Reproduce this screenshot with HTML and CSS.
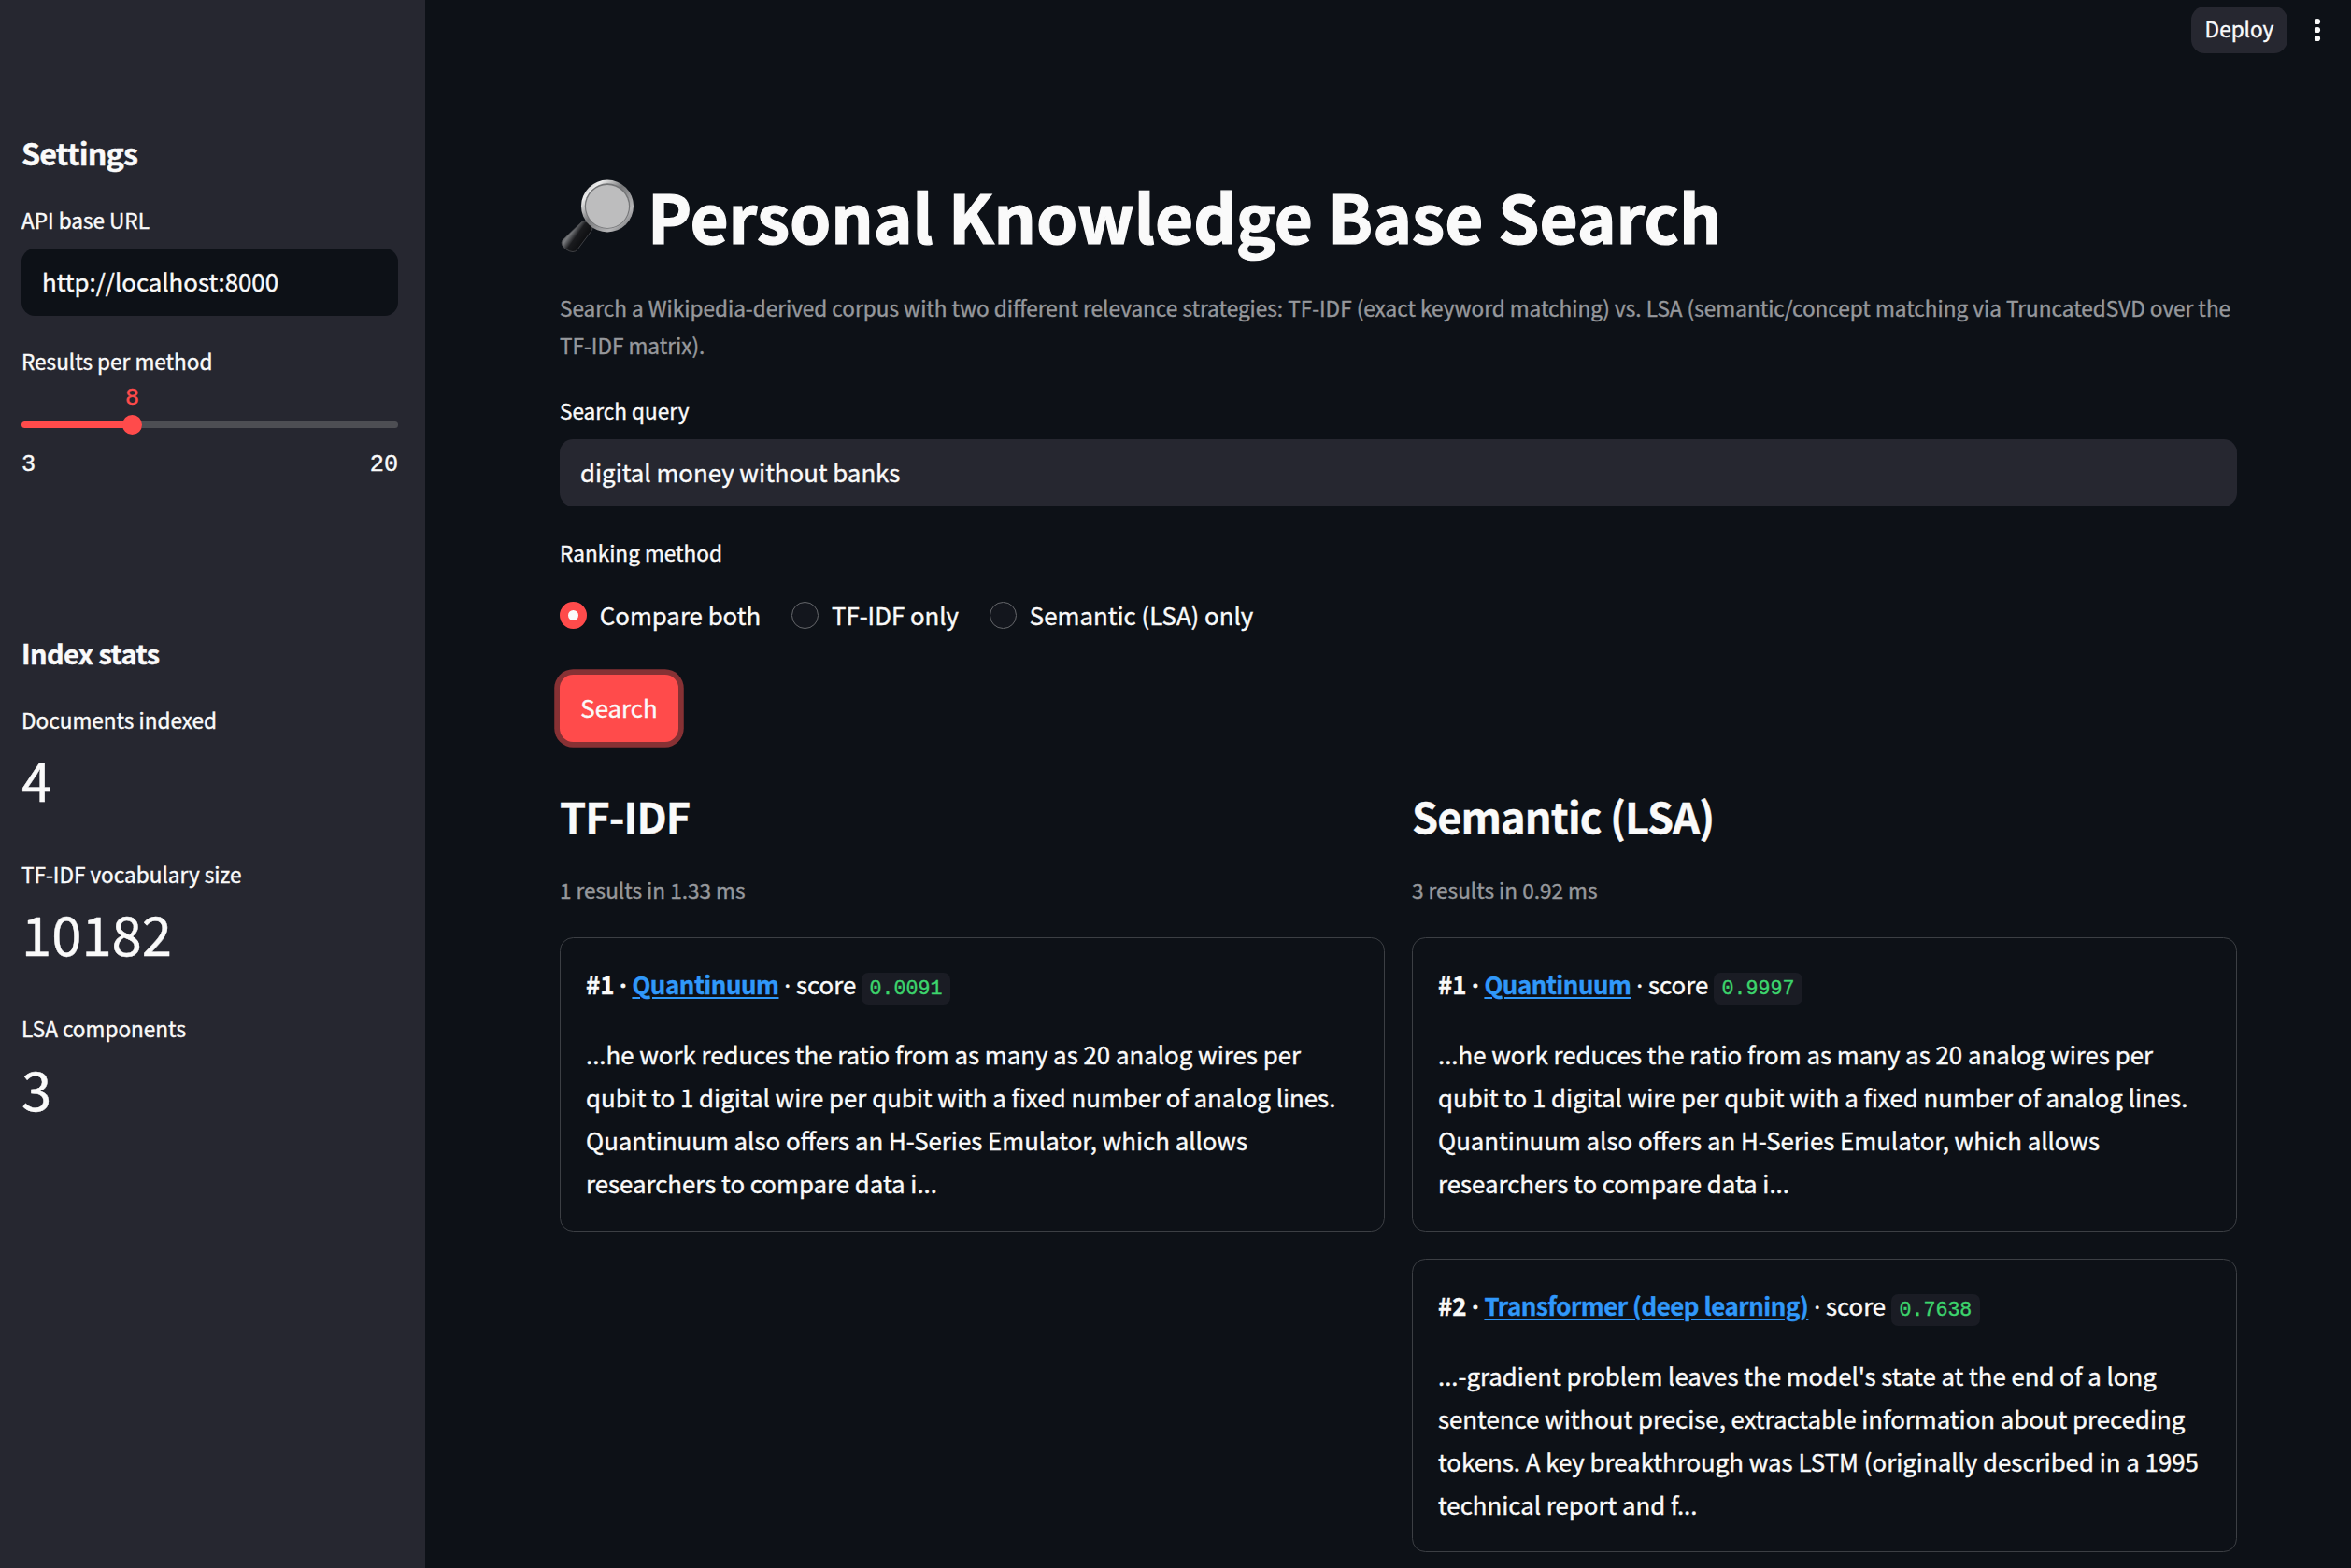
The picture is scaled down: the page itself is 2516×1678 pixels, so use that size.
FILE: index.html
```html
<!DOCTYPE html>
<html lang="en">
<head>
    <meta charset="UTF-8">
    <meta name="viewport" content="width=device-width, initial-scale=1.0">
    <title>Personal Knowledge Base Search</title>
    <link rel="stylesheet" href="styles.css">
</head>
<body>
    <aside class="sidebar">
        <h2 class="side-title">Settings</h2>
        <label class="label" for="api-url">API base URL</label>
        <input class="input input-dark" id="api-url" type="text" value="http://localhost:8000">

        <div class="label slider-label">Results per method</div>
        <div class="slider">
            <div class="track"></div>
            <div class="thumb"><span class="thumb-value">8</span></div>
        </div>
        <div class="ticks">
            <span>3</span>
            <span>20</span>
        </div>

        <hr>

        <h3 class="side-subtitle">Index stats</h3>
        <div class="metric">
            <div class="label">Documents indexed</div>
            <div class="metric-value">4</div>
        </div>
        <div class="metric">
            <div class="label">TF-IDF vocabulary size</div>
            <div class="metric-value">10182</div>
        </div>
        <div class="metric">
            <div class="label">LSA components</div>
            <div class="metric-value">3</div>
        </div>
    </aside>

    <div class="page">
        <header class="toolbar">
            <button class="deploy">Deploy</button>
            <svg class="menu" width="8" height="26" viewBox="0 0 8 26">
                <circle cx="4" cy="4" r="3.1"/>
                <circle cx="4" cy="13" r="3.1"/>
                <circle cx="4" cy="22" r="3.1"/>
            </svg>
        </header>

        <main class="content">
            <h1>
                <svg class="magnifier" width="80" height="84" viewBox="0 0 80 84">
                    <defs>
                        <linearGradient id="rim" x1="0" y1="0" x2="1" y2="1">
                            <stop offset="0" stop-color="#8c8c8e"/>
                            <stop offset="0.2" stop-color="#eeeeee"/>
                            <stop offset="0.45" stop-color="#77787a"/>
                            <stop offset="0.75" stop-color="#b5b5b7"/>
                            <stop offset="1" stop-color="#5c5d60"/>
                        </linearGradient>
                        <linearGradient id="handle" x1="0" y1="0" x2="1" y2="0.7">
                            <stop offset="0" stop-color="#1b1d20"/>
                            <stop offset="0.38" stop-color="#77797c"/>
                            <stop offset="0.55" stop-color="#1a1b1e"/>
                            <stop offset="0.9" stop-color="#08090b"/>
                            <stop offset="1" stop-color="#55575a"/>
                        </linearGradient>
                    </defs>
                    <path d="M26 49 L31 44 L37 50 L34 56 Z" fill="#a4a4a6"/>
                    <path d="M23 48 Q26 45 31 49 Q37 53 34 57 L19 77 Q15 82 7 77 Q0 72 3 67 Z" fill="url(#handle)" stroke="#4b4d50" stroke-width="0.8"/>
                    <circle cx="51" cy="30.5" r="28" fill="url(#rim)"/>
                    <circle cx="51" cy="30.5" r="24.2" fill="#737476"/>
                    <circle cx="51" cy="31" r="23" fill="#bdbdbe"/>
                </svg>
                Personal Knowledge Base Search
            </h1>
            <p class="caption intro">Search a Wikipedia-derived corpus with two different relevance strategies: TF-IDF (exact keyword matching) vs. LSA (semantic/concept matching via TruncatedSVD over the TF-IDF matrix).</p>

            <label class="label" for="query">Search query</label>
            <input class="input" id="query" type="text" value="digital money without banks">

            <div class="label radio-label">Ranking method</div>
            <div class="radios">
                <div class="radio"><span class="dot checked"></span>Compare both</div>
                <div class="radio"><span class="dot"></span>TF-IDF only</div>
                <div class="radio"><span class="dot"></span>Semantic (LSA) only</div>
            </div>

            <button class="search-btn">Search</button>

            <div class="columns">
                <section>
                    <h2>TF-IDF</h2>
                    <p class="caption">1 results in 1.33 ms</p>
                    <article class="card">
                        <p><b>#1 <span class="sep">·</span> <a href="#">Quantinuum</a></b> <span class="sep">·</span> score <code>0.0091</code></p>
                        <p>...he work reduces the ratio from as many as 20 analog wires per qubit to 1 digital wire per qubit with a fixed number of analog lines. Quantinuum also offers an H-Series Emulator, which allows researchers to compare data i...</p>
                    </article>
                </section>
                <section>
                    <h2>Semantic (LSA)</h2>
                    <p class="caption">3 results in 0.92 ms</p>
                    <article class="card">
                        <p><b>#1 <span class="sep">·</span> <a href="#">Quantinuum</a></b> <span class="sep">·</span> score <code>0.9997</code></p>
                        <p>...he work reduces the ratio from as many as 20 analog wires per qubit to 1 digital wire per qubit with a fixed number of analog lines. Quantinuum also offers an H-Series Emulator, which allows researchers to compare data i...</p>
                    </article>
                    <article class="card">
                        <p><b>#2 <span class="sep">·</span> <a href="#">Transformer (deep learning)</a></b> <span class="sep">·</span> score <code>0.7638</code></p>
                        <p>...-gradient problem leaves the model's state at the end of a long sentence without precise, extractable information about preceding tokens. A key breakthrough was LSTM (originally described in a 1995 technical report and f...</p>
                    </article>
                </section>
            </div>
        </main>
    </div>
</body>
</html>
```
FILE: styles.css
```css
* {
    margin: 0;
    padding: 0;
    box-sizing: border-box;
}
body {
    display: flex;
    height: 100vh;
    overflow: hidden;
    background-color: #0d1117;
    color: #fafafa;
    font-family: "Noto Sans CJK JP", "Noto Sans", sans-serif;
    font-size: 25.8px;
    line-height: 46.08px;
    -webkit-text-stroke: 0.4px;
}
input, button {
    font-family: inherit;
    font-size: inherit;
    color: inherit;
    border: none;
    outline: none;
}

/* sidebar */
.sidebar {
    width: 455px;
    flex-shrink: 0;
    padding: 142px 29px 0 23px;
    background-color: #262730;
}
.side-title {
    font-size: 32.25px;
    line-height: 43px;
    letter-spacing: -0.8px;
    margin-bottom: 31px;
}
.side-subtitle {
    font-size: 29px;
    line-height: 39px;
    letter-spacing: -0.6px;
    margin-bottom: 33px;
}
.label {
    display: block;
    font-size: 22.57px;
    line-height: 40.32px;
}
.input {
    display: block;
    width: 100%;
    height: 72px;
    margin-top: 10px;
    padding: 0 22px 3px;
    border-radius: 14.4px;
    background-color: #262730;
}
.input-dark {
    background-color: #0d1117;
}
.slider-label {
    margin-top: 29px;
}
.slider {
    position: relative;
    margin-top: 43px;
}
.track {
    height: 7px;
    border-radius: 4px;
    background: linear-gradient(to right, #ff4b4b 29.41%, #4d4e53 29.41%);
}
.thumb {
    position: absolute;
    top: -7px;
    left: 29.41%;
    width: 21.6px;
    height: 21.6px;
    margin-left: -10.8px;
    border-radius: 50%;
    background-color: #ff4b4b;
}
.thumb-value {
    position: absolute;
    bottom: 18px;
    left: 50%;
    transform: translateX(-50%);
    color: #ff4b4b;
}
.thumb-value, .ticks {
    font-family: "Liberation Mono", monospace;
    font-size: 25.2px;
    line-height: 40px;
}
.ticks {
    display: flex;
    justify-content: space-between;
    margin-top: 20px;
}
hr {
    border: none;
    height: 1px;
    margin: 84px 0 76px;
    background-color: #4d4e56;
}
.metric {
    margin-bottom: 41px;
}
.metric-value {
    font-size: 58px;
    line-height: 84px;
}

/* main area */
.page {
    flex: 1;
    min-width: 0;
}
.toolbar {
    display: flex;
    justify-content: flex-end;
    align-items: center;
    height: 108px;
    padding: 7px 32px 51px 0;
}
.deploy {
    width: 103px;
    height: 50px;
    margin-right: 28px;
    padding-bottom: 3px;
    border-radius: 14.4px;
    background-color: #262730;
    font-size: 22.57px;
}
.menu {
    fill: #fafafa;
}
.content {
    padding: 75px 122px 0 144px;
}
h1 {
    display: flex;
    font-size: 70.9px;
    line-height: 95px;
    letter-spacing: -0.04px;
    margin-bottom: 32px;
    -webkit-text-stroke: 1.2px;
}
.magnifier {
    margin: 7px 14px 0 0;
}
.caption {
    font-size: 22.57px;
    line-height: 40.32px;
    color: #96989c;
    margin-bottom: 30px;
}
.intro {
    margin-bottom: 29px;
}
.radio-label {
    margin-top: 30px;
}
.radios {
    display: flex;
    gap: 33px;
    margin: 23px 0 41px;
}
.radio {
    display: flex;
    align-items: center;
}
.dot {
    width: 28.8px;
    height: 28.8px;
    margin-right: 14px;
    border: 1.5px solid #65676b;
    border-radius: 50%;
    background-color: #13161d;
}
.checked {
    border: 9.4px solid #ff4b4b;
    background-color: #fafafa;
}
.search-btn {
    display: block;
    width: 127px;
    height: 72px;
    padding-bottom: 3px;
    border-radius: 14.4px;
    background-color: #ff4b4b;
    box-shadow: 0 0 0 5.76px #873134;
}
.columns {
    display: grid;
    grid-template-columns: 1fr 1fr;
    gap: 29px;
    margin-top: 49px;
}
h2 {
    font-size: 45.1px;
    line-height: 60.5px;
    letter-spacing: -0.9px;
}
section h2 {
    margin-bottom: 29px;
}
.card {
    padding: 26px 27px 27px;
    margin-bottom: 29px;
    border: 1px solid #3c3f44;
    border-radius: 14.4px;
}
.card p + p {
    margin-top: 29px;
}
.sep {
    font-family: "Noto Sans", sans-serif;
    line-height: 1;
}
a {
    color: #3098fa;
    letter-spacing: -0.4px;
    text-decoration-thickness: 2px;
    text-underline-offset: 3px;
}
code {
    padding: 5px 8.6px;
    border-radius: 7.2px;
    background-color: #1a1c24;
    color: #3dd56d;
    font-family: "Liberation Mono", monospace;
    font-size: 21.6px;
    line-height: 1;
}
```
